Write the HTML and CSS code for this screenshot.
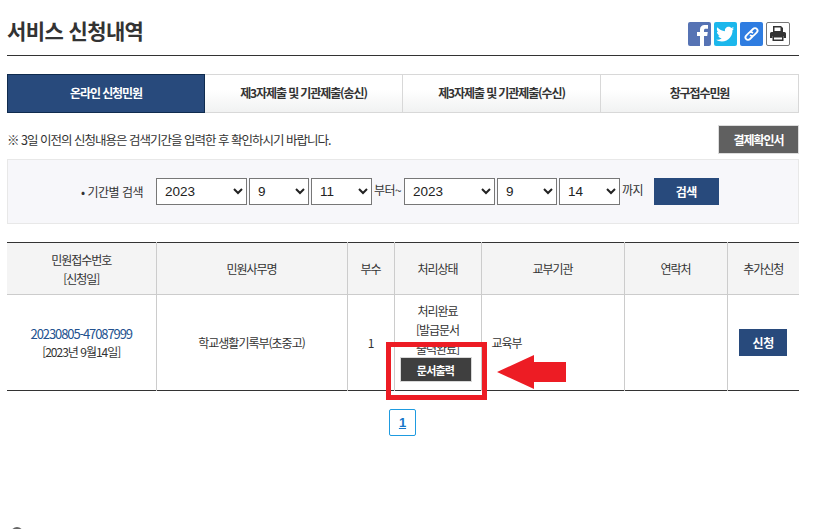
FILE: index.html
```html
<!DOCTYPE html>
<html lang="ko">
<head>
<meta charset="utf-8">
<title>서비스 신청내역</title>
<link rel="stylesheet" href="styles.css">
</head>
<body>
<main class="page">
  <header class="head">
    <h1 class="title">서비스 신청내역</h1>
    <div class="share">
      <a class="ico fb"><svg viewBox="0 0 23 24" width="23" height="24"><path fill="#fff" d="M12 24V14H9v-4h3V7.500C12 4.500 14 3 16.500 3H20v3.800h-2.200c-1.300 0-1.800.6-1.800 1.700V10h3.800l-.6 4H16v10z"/></svg></a>
      <a class="ico tw"><svg viewBox="0 0 24 24" width="23" height="24"><path fill="#fff" d="M21 6.300c-.7.300-1.400.5-2.200.6.800-.5 1.400-1.200 1.700-2.100-.8.400-1.600.8-2.500.9C17.300 4.900 16.300 4.400 15.200 4.400c-2.500 0-4.300 2.300-3.700 4.700C8.300 8.900 5.400 7.400 3.500 5c-1 1.800-.5 4 1.200 5.200-.6 0-1.200-.2-1.700-.5 0 1.800 1.300 3.500 3.100 3.900-.6.100-1.100.2-1.700.1.500 1.500 1.900 2.600 3.600 2.700-1.700 1.300-3.800 1.900-5.800 1.600 1.700 1.100 3.800 1.800 6 1.800 7.300 0 11.400-6.200 11.100-11.700.8-.6 1.400-1.200 1.900-2z"/></svg></a>
      <a class="ico ln"><svg viewBox="0 0 23 24" width="23" height="24" fill="none" stroke="#fff" stroke-width="1.800" stroke-linecap="round"><path d="M10.500 9.500 13 7c1.200-1.200 2.800-1.200 3.800-.2s1 2.600-.2 3.800l-2.500 2.500c-1.100 1.100-2.500 1.200-3.500.3"/><path d="M12.500 14.500 10 17c-1.200 1.200-2.800 1.200-3.800.2s-1-2.600.2-3.800l2.500-2.500c1.100-1.100 2.500-1.200 3.500-.3"/></svg></a>
      <a class="ico pr"><svg viewBox="0 0 22 22" width="22" height="22" fill="#333"><path d="M6 3h8l2 2v4H6z"/><path d="M7.500 4.500h6V8h-6z" fill="#fff"/><path d="M4.500 9h13A1.500 1.500 0 0 1 19 10.500V15h-2.500v-2h-11v2H3v-4.500A1.500 1.500 0 0 1 4.500 9z"/><path d="M5.500 13h11v5h-11zM7 14.500V16.500h8v-2z"/></svg></a>
    </div>
  </header>

  <nav class="tabs">
    <a class="tab on">온라인 신청민원</a>
    <a class="tab">제3자제출 및 기관제출(송신)</a>
    <a class="tab">제3자제출 및 기관제출(수신)</a>
    <a class="tab">창구접수민원</a>
  </nav>

  <div class="notice">
    <p class="note">※ 3일 이전의 신청내용은 검색기간을 입력한 후 확인하시기 바랍니다.</p>
    <button class="receipt">결제확인서</button>
  </div>

  <form class="filter">
    <span class="lbl">• 기간별 검색</span>
    <select class="sel y"><option>2023</option></select>
    <select class="sel m"><option>9</option></select>
    <select class="sel d"><option>11</option></select>
    <span class="txt">부터~</span>
    <select class="sel y"><option>2023</option></select>
    <select class="sel m"><option>9</option></select>
    <select class="sel d"><option>14</option></select>
    <span class="txt end">까지</span>
    <button class="go" type="button">검색</button>
  </form>

  <table class="list">
    <colgroup>
      <col class="c1"><col class="c2"><col class="c3"><col class="c4"><col class="c5"><col class="c6"><col class="c7">
    </colgroup>
    <thead>
      <tr>
        <th>민원접수번호<br>[신청일]</th>
        <th>민원사무명</th>
        <th>부수</th>
        <th>처리상태</th>
        <th>교부기관</th>
        <th>연락처</th>
        <th>추가신청</th>
      </tr>
    </thead>
    <tbody>
      <tr>
        <td><a class="num">20230805-47087999</a><br>[2023년 9월14일]</td>
        <td>학교생활기록부(초중고)</td>
        <td>1</td>
        <td class="status">처리완료<br>[발급문서<br>출력완료]<button class="print">문서출력</button></td>
        <td class="left">교육부</td>
        <td></td>
        <td><button class="apply">신청</button></td>
      </tr>
    </tbody>
  </table>

  <div class="pager"><a class="pg">1</a></div>

  <div class="mark-box"></div>
  <svg class="mark-arrow" viewBox="0 0 70 34" width="70" height="34"><path fill="#ed1c24" d="M0 17 37 0v7h32v20H37v7z"/></svg>
  <span class="dot"></span>
</main>
</body>
</html>
```
FILE: styles.css
```css
* { box-sizing: border-box; }
html, body { margin: 0; height: 529px; overflow: hidden; background: #fff; }
body {
  font-family: "Noto Sans CJK KR", "Noto Sans", sans-serif;
  font-size: 12px;
  color: #333;
  letter-spacing: -1px;
}
.page { position: relative; width: 792px; margin-left: 7px; height: 529px; }

.head {
  height: 56px;
  border-bottom: 1px solid #333;
  display: flex;
  justify-content: space-between;
  align-items: flex-start;
}
.title { margin: 15px 0 0; font-size: 21px; line-height: 30px; font-weight: 700; letter-spacing: -0.6px; color: #333; }
.share { display: flex; gap: 3px; margin: 22px 9px 0 0; }
.ico { width: 23px; height: 24px; border-radius: 2px; display: block; overflow: hidden; }
.fb { background: #5673b4; }
.tw { background: #1cb7ec; }
.ln { background: #2f7de1; }
.pr { background: #fff; border: 1px solid #777; width: 24px; display: flex; align-items: center; justify-content: center; }

.tabs { display: grid; grid-template-columns: repeat(4, 198px); margin-top: 18px; height: 39px; }
.tab {
  display: flex; align-items: center; justify-content: center;
  border: 1px solid #d8d8d8;
  border-left-width: 0;
  background: linear-gradient(#fff 40%, #f1f2f2);
  font-size: 12px; font-weight: 700; color: #333; letter-spacing: -1.1px;
  padding-bottom: 3px;
}
.tab.on { background: #284a7c; border: 1px solid #0f2b4e; color: #fff; }

.notice { display: flex; justify-content: space-between; align-items: center; margin-top: 12px; height: 29px; }
.note { margin: 0; font-size: 12.500px; letter-spacing: -1px; color: #333; }
.receipt {
  width: 81px; height: 29px; border: 1px solid #dcdcdc; background: #606060; color: #fff;
  font: 700 12px "Noto Sans CJK KR", sans-serif; letter-spacing: -1px;
}

.filter {
  margin-top: 5px; height: 65px;
  background: #f7f7fa; border: 1px solid #e8e8e8;
  display: flex; align-items: center;
  padding: 0 0 1px 73px;
}
.lbl { width: 75px; font-size: 12px; letter-spacing: -0.5px; }
.sel {
  height: 27px; margin-right: 2px;
  background-color: #fff; border: 1px solid #777; border-radius: 0;
  font: 13.500px "Liberation Sans", sans-serif; letter-spacing: 0; color: #222;
  padding-left: 4px;
}
.sel.y { width: 91px; }
.sel.m { width: 60px; }
.sel.d { width: 61px; }
.txt { margin: 0 3px 3px 0; font-size: 12px; letter-spacing: -0.6px; }
.go {
  margin-left: 8px; width: 65px; height: 27px; border: 0; background: #284a7c; color: #fff;
  font: 700 12px "Noto Sans CJK KR", sans-serif; letter-spacing: -0.4px;
}

.list {
  margin-top: 18px; width: 792px; table-layout: fixed; border-collapse: collapse;
  border-top: 1px solid #333; border-bottom: 1px solid #333;
}
.c1 { width: 149px; } .c2 { width: 191px; } .c3 { width: 47px; } .c4 { width: 87px; }
.c5 { width: 143px; } .c6 { width: 103px; } .c7 { width: 72px; }
.list th, .list td { border-left: 1px solid #ccc; padding: 0; text-align: center; }
.list th:first-child, .list td:first-child { border-left: 0; }
.list th {
  height: 52px; background: #f4f4f4; border-bottom: 1px solid #ccc;
  font-weight: 400; font-size: 12px; line-height: 19px; color: #333;
}
.list td { height: 96px; font-size: 12px; line-height: 18px; color: #333; vertical-align: middle; }
.num { color: #23528f; font-size: 13px; letter-spacing: -1.1px; }
.left { text-align: left !important; padding-left: 10px !important; }
.status { position: relative; line-height: 19px !important; vertical-align: top !important; padding-top: 6px !important; overflow: hidden; }
.print {
  position: absolute; left: 5px; top: 62px;
  width: 72px; height: 25px; border: 1px solid #d8d8d8; background: #3f3f3f; color: #fff;
  font: 700 11px "Noto Sans CJK KR", sans-serif; letter-spacing: -0.8px;
}
.apply {
  width: 48px; height: 27px; border: 0; background: #284a7c; color: #fff;
  font: 700 12px "Noto Sans CJK KR", sans-serif; letter-spacing: -0.4px;
}

.pager { display: flex; justify-content: center; margin-top: 18px; padding-right: 1px; }
.pg {
  width: 27px; height: 27px; border: 1px solid #1e9be0; border-radius: 2px;
  display: flex; align-items: center; justify-content: center;
  color: #1877c9; font: 700 13px "Liberation Sans", sans-serif; text-decoration: underline; letter-spacing: 0;
}

.mark-box { position: absolute; left: 379px; top: 342px; width: 101px; height: 58px; border: 5px solid #ed1c24; }
.mark-arrow { position: absolute; left: 490px; top: 355px; }
.dot { position: absolute; left: 4px; top: 527px; width: 12px; height: 12px; border-radius: 50%; background: #666; }
```
